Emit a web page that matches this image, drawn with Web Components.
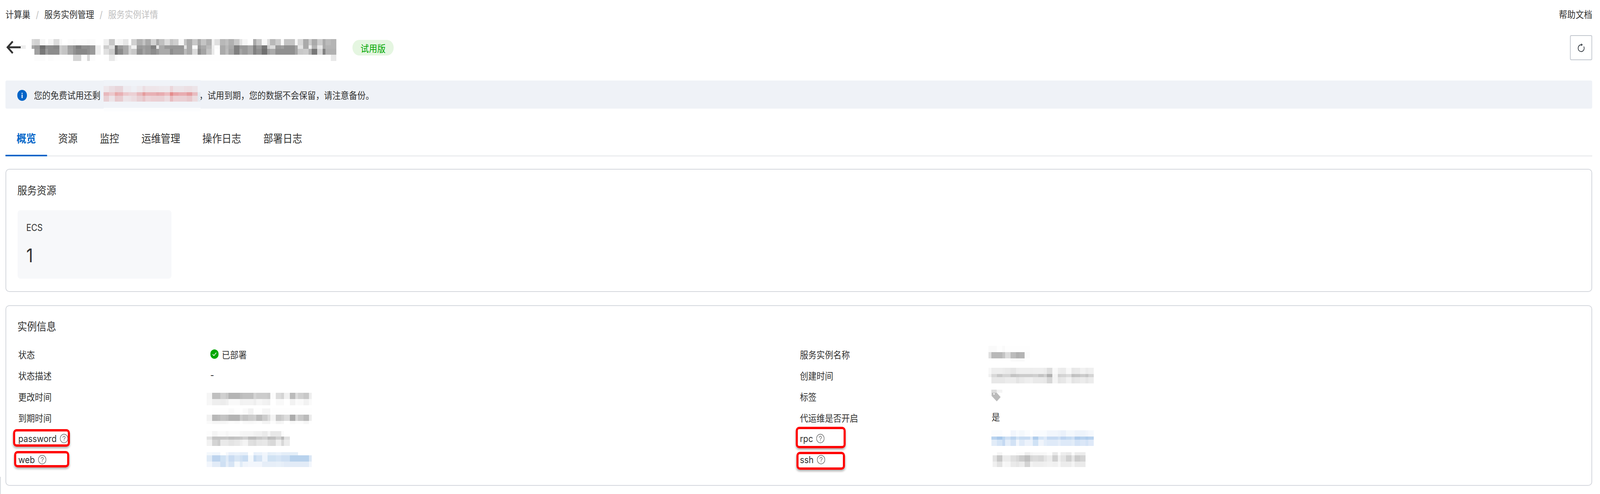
<!DOCTYPE html>
<html lang="zh-CN">
<head>
<meta charset="utf-8">
<title>服务实例详情</title>
<script>document.documentElement.style.setProperty('--k',Math.min(1,window.innerWidth/4616));</script>
<style>
html,body{margin:0;padding:0;background:#fff;}
body{font-family:Inter,"Noto Sans CJK SC",sans-serif;font-size:24px;color:#333;height:1264px;overflow:hidden;position:relative;}
</style>
</head>
<body>
<page-shell>
  <crumb-bar>
    <crumb-link>计算巢</crumb-link>
    <crumb-link>服务实例管理</crumb-link>
    <crumb-link current>服务实例详情</crumb-link>
    <span slot="end">帮助文档</span>
  </crumb-bar>
  <title-bar>
    <pixel-block data-set="title"></pixel-block>
    <trial-badge>试用版</trial-badge>
  </title-bar>
  <notice-bar>
    <span>您的免费试用还剩</span>
    <pixel-block data-set="notice" slot="veil"></pixel-block>
    <span slot="tail">，试用到期，您的数据不会保留，请注意备份。</span>
  </notice-bar>
  <tab-strip>
    <tab-item active>概览</tab-item>
    <tab-item>资源</tab-item>
    <tab-item>监控</tab-item>
    <tab-item>运维管理</tab-item>
    <tab-item>操作日志</tab-item>
    <tab-item>部署日志</tab-item>
  </tab-strip>
  <panel-card heading="服务资源" kind="res">
    <stat-tile label="ECS" value="1"></stat-tile>
  </panel-card>
  <panel-card heading="实例信息" kind="info">
    <desc-grid>
      <desc-item label="状态"><status-ok>已部署</status-ok></desc-item>
      <desc-item label="服务实例名称" col="r"><pixel-block data-set="e" style="margin-top:6px"></pixel-block></desc-item>

      <desc-item label="状态描述"><plain-val>-</plain-val></desc-item>
      <desc-item label="创建时间" col="r"><pixel-block data-set="f" style="margin-top:8px"></pixel-block></desc-item>

      <desc-item label="更改时间"><pixel-block data-set="a" style="margin-top:18px"></pixel-block></desc-item>
      <desc-item label="标签" col="r"><tag-blur></tag-blur></desc-item>

      <desc-item label="到期时间"><pixel-block data-set="b" style="margin-top:4px"></pixel-block></desc-item>
      <desc-item label="代运维是否开启" col="r"><plain-val r>是</plain-val></desc-item>

      <desc-item label="password" help mark="-13,3,164,45"><pixel-block data-set="c" style="margin-top:8px"></pixel-block></desc-item>
      <desc-item label="rpc" help col="r" mark="-10,-3,144,55"><pixel-block data-set="g" style="margin:6px 0 0 8px"></pixel-block></desc-item>

      <desc-item label="web" help mark="-10,5,159,42"><pixel-block data-set="d" style="margin-top:8px"></pixel-block></desc-item>
      <desc-item label="ssh" help col="r" mark="-8,7,140,46"><pixel-block data-set="h" style="margin:8px 0 0 12px"></pixel-block></desc-item>
    </desc-grid>
  </panel-card>
</page-shell>

<script>
const rep=(arr,n)=>{let o=[];for(let i=0;i<n;i++)o=o.concat(arr);return o;};
const U=a=>a.map(x=>x*8);
const c221=U([2,2,1,2,1,...rep([2,2,1],6)]);
const SETS={
 title:{cols:[15,16,...U(rep([1,2,2],22))],rows:[
  [16,"ff ff d8 d2 f6 ff f5 dc f7 ff fc f9 fc fb f9 fa ff ff ef c8 f8 f3 e6 ff d0 b0 c4 aa d2 aa c0 dc c4 ce f8 c4 aa c8 a8 c4 b0 f2 e0 b8 c0 b0 c8 e4 f6 ff aa c8 f8 dc b8 cc fa c4 c4 f8 d8 aa cc aa cc aa bb b4"],
  [9,"ee ff a8 9a 6e 90 8c 86 cc c4 a0 92 7e 90 8e 98 ee ff cc e0 6e 99 aa d4 f2 99 a0 99 80 e8 aa 99 96 96 96 e4 aa fa 99 aa bb ee fc aa b8 aa 80 99 99 a8 80 99 77 cc dc 99 a0 90 90 a4 e4 aa f0 b4 e8 aa b4 b4"],
  [15,"ff ff ff a0 78 9c 8c 8c cc c4 a4 92 88 88 90 99 ee ff e0 cc 70 8c aa d4 c8 90 a4 99 8c 99 aa aa 8c 99 99 bb aa dc 8c a4 c4 ea ff aa bb a4 80 a4 99 a8 80 90 70 a0 aa 90 90 90 90 a4 c8 cc b0 77 d4 80 b0 b0"],
  [16,"ff ff ff fc fc ff fc fe fe fe fe d4 d4 fc d8 fc ff ff fe e8 fa fe*46 e8"]
 ]},
 notice:{cols:U(rep([2,2,1],7)),rows:[
  [15,"f0f3f8*21"],
  [16,"eee7eb eaddE2 e8d5da e8d5da eeebf0 eeebf0 eef0f5 eeeaee ecdde2 eee5e9 eee5e9 eee6ea eee8ec eee9ed ecd6da ece4e8 ece4e8 ece0e4 ecdfe3 ece4e8 f0f2f7"],
  [9,"e8b8bc ecc8cc e8a8a8 e8b0b4 ecc8cc ecd0d4 ecd0d4 e8b8bc e49c9c e8b0b4 e8b0b4 e4a8ac e8acb0 ecbcc0 e48c8c e8a4a8 e8acb0 e8acb0 e49c9e e8bcc0 e4eaf0"],
  [15,"e8cfd3 ece4e8 e8c8cc e8ccd0 ece4e8 ece2e6 ecdce0 e8d0d4 e8c4c8 ecd4d8 ecd0d4 ead0d4 ead0d4 ecdce0 e8bcc0 ecd0d4 ead0d4 ead0d4 e8c8cc ecdcdf e4eaf0"],
  [16,"f0f3f8*21"],
  [9,"fcfdfe*21"]
 ]},
 a:{cols:c221,rows:[
  [16,"f6 c0 c0 d0 c8 b4 b4 bc c0 c0 d4 cc cc c8 fc dc d4 f0 bb dc d0 c8 ee"],
  [16,"f7 ee ee ec f0 f9 f9 f2 f3 f3 ee f6 f2 f0 ff f9 f9 ff f2 fa f9 f2 fa"]
 ]},
 b:{cols:c221,rows:[
  [16,"ff fe fe fe fe fa fe ff fa f2 fe fe f6 f6 fe fe fe fe fe fe fe fe fe"],
  [16,"f2 b8 bc c4 c0 b4 b4 cc c4 cc d0 bc cc dc f4 c8 d0 dc ac d8 c8 bb ec"],
  [8,"fa f6 f6 f6 f8 fc fa fe f9 f8 fa fc f4 f4 fc f4 f6 ff f9 fc fc f6 fe"]
 ]},
 c:{cols:U([2,2,1,2,1,...rep([2,2,1],4),2,2,1,2]),rows:[
  [14,"fd f4 fa fa f6 fa fa f6 f5 f5 f1 f0 ea f4 e8 e8 fb ff"],
  [8,"e2 c4 c4 c6 c8 c0 c4 c8 d0 bc bc c8 d0 bb c0 d0 b8 e0"],
  [16,"f2 d4 cc ea ea e4 e8 ee f4 e0 dc e6 e8 dc d8 ee d8 ec"]
 ]},
 d:{cols:c221,rows:[
  [8,"f4f8fc f0f6fc f0f6fc ffffff f4f7fc e8f0fa eaf2fb e6eff9 e6eff9 ffffff e8f0fa eaf2fb f2f6fc e4eef8 e6f0f9 eaf2fb e4eef8 e4eef8 e4eef8 e4eef8 ffffff ffffff ffffff"],
  [16,"e0ebf7 bdd4ee bdd4ee d0e2f4 e0ebf7 cadcf2 d8e6f5 d0e1f3 c8dcf2 f4f8fc c8dcf1 d4e3f4 eef4fc d0e2f3 d0e2f3 d6e5f5 cfe0f3 cfe0f3 b8d2ed b8d2ed b8d2ed b8d2ed dce8f5"],
  [14,"f2f6fc e2ebf7 e2ebf7 cfe0f3 e6eef8 d6e4f5 f4f8fc e0ebf7 eff4fb f2f6fc f2f6fc f2f6fc e6eef8 e6eef8 e6eef8 e8f0f9 e6eef8 e2ebf7 e2ebf7 e2ebf7 e2ebf7 e2ebf7 f2f6fc"]
 ]},
 e:{cols:U([1,2,2,1,2,2,1,2,2]),rows:[
  [16,"fa fa fe fa fe fe fe fe fe"],
  [16,"e0 b8 b8 c4 dc bc b0 b4 fc"],
  [8,"ff ff ff ff ff fa fa fa ff"]
 ]},
 f:{cols:U([...rep([1,2,2],7),1,2]),rows:[
  [16,"f8 ee ee ec ea e6 ee ef ef ee ef ef ec de f9 ee ec f9 e8 ea f2 ec f0"],
  [8,"f0 d8 c8 d4 d4 c4 c8 cc cc cc d0 c4 d0 b0 f4 d0 d4 dc c0 c4 cc c4 d4"],
  [16,"ff e8 e8 e8 ec ec e4 ea ee f0 ea ea e8 d6 f4 e4 e8 f2 e4 e8 ec e6 ec"]
 ]},
 g:{cols:U([...rep([2,2,1],7),2]),rows:[
  [16,"fafcfe fafcfe ffffff ffffff f2f6fc f8fbfe f4f8fc fafcfe ffffff f9fbfe f9fbfe f8fbfe f2f6fc f2f6fc eff4fb eaf1fa f4f8fc f4f8fc eef4fb eef4fb f2f6fc f6f9fd"],
  [8,"b8d3ef a8c8ea bcd6f0 cfe0f4 bcd4ef d4e4f5 c8dcf2 c8dcf2 e0ebf8 b0cdec d4e4f6 dfeaf8 c6daf2 c6daf2 d0e1f5 bdd4f0 c4daf2 cfe0f4 b0cdec b8d2ee b0cdec b8d2ee"],
  [16,"e2ecf8 d4e4f6 c4d9f2 e4edf9 d2e2f5 f2f6fc dfeaf8 ecf2fb ecf2fb d0e2f5 eff4fb e4edf9 dfeaf8 dfeaf8 e6eef9 dde9f8 dde9f8 e2ecf8 d4e3f6 dbe7f7 d4e3f6 dfe9f8"]
 ]},
 h:{cols:[12,...U([2,1,2,2,1,2,2,1,2,2,1,2,2,1,2,2,1,2,2])],rows:[
  [8,"ff f6 ff ff ff fc fb ee f5 f7 f7 f8 fc e8 fc ee ea fa ec ec"],
  [16,"e4 c8 ec ec e0 d8 cc c0 d8 dc d8 e4 ec d0 f0 e4 d0 e6 cc d4"],
  [14,"f0 e2 f8 f6 ea e6 ec d4 f2 ee ee f0 f2 f0 f7 ec ec f4 ea ea"]
 ]}
};
function expand(s){
  const out=[];
  s.split(/\s+/).forEach(t=>{
    const [c,n]=t.split('*');
    const col=c.length===2?'#'+c+c+c:'#'+c;
    for(let i=0;i<(n?+n:1);i++)out.push(col);
  });
  return out;
}
function def(name,html,setup){
  const tpl=document.createElement('template');
  tpl.innerHTML=html;
  customElements.define(name,class extends HTMLElement{
    constructor(){super();this.attachShadow({mode:'open'}).appendChild(tpl.content.cloneNode(true));}
    connectedCallback(){if(setup&&!this._d){this._d=1;setup.call(this,this.shadowRoot);}}
  });
}
const HELP='<svg width="24" height="24" viewBox="0 0 24 24" fill="none" stroke="#666" stroke-width="1.5"><circle cx="12" cy="12" r="11"/><path d="M8.7 9.4a3.3 3.3 0 1 1 5 2.8c-1.1.7-1.7 1.3-1.7 2.6" stroke-linecap="round"/><circle cx="12" cy="17.8" r="1" fill="#666" stroke="none"/></svg>';

/* --k fits the 4616-wide design to the window: boxes are fluid, their contents are fitted with scaleX(--k). */
def('page-shell',`<style>:host{display:block;box-sizing:border-box;width:100%;padding:20px calc(22px * var(--k)) 0 calc(16px * var(--k))}
.edge{position:absolute;left:0;top:1220px;width:2px;height:44px;background:#d8dbe0}</style><slot></slot><div class="edge"></div>`);

def('crumb-bar',`<style>:host{display:flex;justify-content:space-between;align-items:center;height:36px;margin-bottom:34px;line-height:36px}
.l{display:flex;transform-origin:0 0;transform:scaleX(var(--k))}
.e{color:#333;transform-origin:100% 0;transform:scaleX(var(--k))}</style><div class="l"><slot></slot></div><div class="e"><slot name="end"></slot></div>`);

def('crumb-link',`<style>:host{display:inline-flex;color:#333;white-space:nowrap}
:host([current]){color:#c1c1c1}
.s{display:inline-block;width:40px;text-align:center;color:#c1c1c1}
:host([current]) .s{display:none}</style><slot></slot><span class="s">/</span>`);

def('title-bar',`<style>:host{display:flex;justify-content:space-between;align-items:center;height:64px;margin-bottom:52px}
.g{display:flex;align-items:center;height:64px;transform-origin:0 0;transform:scaleX(var(--k))}
svg{display:block;flex:none}
.arrow{margin:-2px 0 0 2px}
.wrap{align-self:flex-start;margin-top:10px;display:flex}
.btn{width:64px;height:64px;box-sizing:border-box;border:2px solid #c1c6ce;border-radius:4px;display:flex;align-items:center;justify-content:center;background:#fff;transform-origin:100% 0;transform:scaleX(var(--k))}
::slotted(trial-badge){margin-left:46px}
</style>
<div class="g"><svg class="arrow" width="42" height="34" viewBox="0 0 42 34" fill="none" stroke="#333" stroke-width="5"><path d="M42 17H4"/><path d="M19 2 4 17l15 15"/></svg>
<div class="wrap"><slot></slot></div></div>
<div class="btn"><svg width="24" height="24" viewBox="0 0 24 24" fill="none" stroke="#3a4047" stroke-width="2"><path d="M12.5 4.6A8.7 8.7 0 1 0 19.8 9"/><path d="M12 1l5 3.6-5 3.6z" fill="#3a4047" stroke="none"/></svg></div>`);

def('trial-badge',`<style>:host{display:inline-flex;align-items:center;justify-content:center;width:119px;height:40px;border-radius:20px;background:#e5f6e1;color:#00a700;margin-top:2px;font-size:24px}</style><slot></slot>`);

def('notice-bar',`<style>:host{display:block;height:72px;background:#eff2f7;border-radius:4px;margin-bottom:32px;color:#333;white-space:nowrap}
.g{display:flex;align-items:center;height:72px;width:max-content;padding-left:34px;transform-origin:0 0;transform:scaleX(var(--k))}
svg{flex:none;margin-right:20px}
.v{align-self:flex-start;margin:-1px -4px 0 9px;position:relative;z-index:1;display:flex}
</style>
<div class="g"><svg width="28" height="28" viewBox="0 0 28 28" style="margin-top:4px"><circle cx="14" cy="14" r="14" fill="#0064c8"/><rect x="12.6" y="12" width="2.8" height="9" fill="#fff"/><rect x="12.6" y="7.5" width="2.8" height="2.8" fill="#fff"/></svg>
<slot></slot><div class="v"><slot name="veil"></slot></div><slot name="tail"></slot></div>`);

def('tab-strip',`<style>:host{display:block;height:90px;box-sizing:border-box;border-bottom:2px solid #e3e5e8;margin-bottom:32px}
.g{display:flex;width:max-content;transform-origin:0 0;transform:scaleX(var(--k))}</style><div class="g"><slot></slot></div>`);

def('tab-item',`<style>:host{display:block;padding:0 32px;height:90px;box-sizing:border-box;font-size:28px;line-height:90px;color:#333;white-space:nowrap}
:host([active]){color:#0064c8;font-weight:700;border-bottom:4px solid #0064c8}</style><slot></slot>`);

def('panel-card',`<style>:host{display:block;box-sizing:border-box;border:2px solid #d4d7dd;border-radius:10px;background:#fff}
:host([kind=res]){height:315px;margin-bottom:34px}
:host([kind=info]){height:462px}
h2{margin:0;font-size:28px;font-weight:400;line-height:40px;color:#333;width:max-content;padding-left:32px;transform-origin:0 0;transform:scaleX(var(--k))}
:host([kind=res]) h2{padding-top:34px;margin-bottom:30px}
:host([kind=info]) h2{padding-top:33px;margin-bottom:23px}
.c{padding-left:calc(32px * var(--k))}
</style><h2></h2><div class="c"><slot></slot></div>`,function(r){r.querySelector('h2').textContent=this.getAttribute('heading');});

def('stat-tile',`<style>:host{display:block;width:444px;height:175px;box-sizing:border-box;background:#f7f8fa;border-radius:8px;padding:27px 25px 0;transform-origin:0 0;transform:scaleX(var(--k))}
.l{font-size:24px;line-height:36px;color:#333}
.v{font-size:48px;line-height:56px;color:#333;margin-top:25px}</style><div class="l"></div><div class="v"></div>`,function(r){
  r.querySelector('.l').textContent=this.getAttribute('label');r.querySelector('.v').textContent=this.getAttribute('value');});

def('desc-grid',`<style>:host{display:grid;grid-template-columns:calc(2255px * var(--k)) calc(2255px * var(--k));grid-auto-rows:54px}</style><slot></slot>`);

def('desc-item',`<style>:host{display:grid;width:1000px;grid-template-columns:545px 1fr;height:54px;color:#333;transform-origin:0 0;transform:scaleX(var(--k))}
:host([col=r]){grid-template-columns:546px 1fr}
.lab{position:relative;display:flex;align-items:center;gap:9px;padding-left:2px;height:54px;white-space:nowrap}
.val{min-width:0}
svg{display:block;flex:none}
.mark{position:absolute;box-sizing:border-box;border:6px solid #f00;border-radius:10px;box-shadow:0 4px 6px rgba(0,0,0,.3)}
</style><div class="lab"><span class="t"></span></div><div class="val"><slot></slot></div>`,function(r){
  const lab=r.querySelector('.lab');
  r.querySelector('.t').textContent=this.getAttribute('label');
  if(this.hasAttribute('help'))lab.insertAdjacentHTML('beforeend',HELP);
  if(this.hasAttribute('mark')){
    const [l,t,w,h]=this.getAttribute('mark').split(',');
    const m=document.createElement('div');m.className='mark';
    m.style.cssText=`left:${l}px;top:${t}px;width:${w}px;height:${h}px`;
    lab.appendChild(m);
  }
});

def('status-ok',`<style>:host{display:flex;align-items:center;gap:9px;height:54px;padding-left:11px}svg{display:block;flex:none}</style>
<svg width="24" height="24" viewBox="0 0 24 24"><circle cx="12" cy="12" r="12" fill="#00a700"/><path d="M6.8 12.4l3.6 3.6 6.8-7.6" fill="none" stroke="#fff" stroke-width="1.8"/></svg><slot></slot>`);

def('plain-val',`<style>:host{display:block;line-height:54px;padding-left:11px}:host([r]){padding-left:9px}</style><slot></slot>`);

def('tag-blur',`<style>:host{display:block;margin:10px 0 0 8px}svg{display:block}</style>
<svg width="32" height="30" viewBox="0 0 32 30"><rect x="0" y="0" width="16" height="8" fill="#dcdcdc"/><rect x="16" y="0" width="16" height="8" fill="#f4f4f4"/><path d="M1 8H16L27 19 16 30 1 16z" fill="#bbb"/><circle cx="8" cy="11" r="2" fill="#fff"/></svg>`);

def('pixel-block',`<style>:host{display:block;width:max-content}svg{display:block}</style><svg shape-rendering="crispEdges"></svg>`,function(r){
  const d=SETS[this.dataset.set];
  const W=d.cols.reduce((a,b)=>a+b,0);
  const H=d.rows.reduce((a,b)=>a+b[0],0);
  const svg=r.querySelector('svg');
  svg.setAttribute('width',W);svg.setAttribute('height',H);svg.setAttribute('viewBox',`0 0 ${W} ${H}`);
  let y=0,s='';
  d.rows.forEach(([h,str])=>{
    const cs=expand(str);let x=0;
    d.cols.forEach((w,i)=>{
      const c=cs[i];
      if(c&&c!=='#ffffff')s+=`<rect x="${x}" y="${y}" width="${w}" height="${h}" fill="${c}"/>`;
      x+=w;
    });
    y+=h;
  });
  svg.innerHTML=s;
});
</script>
</body>
</html>
